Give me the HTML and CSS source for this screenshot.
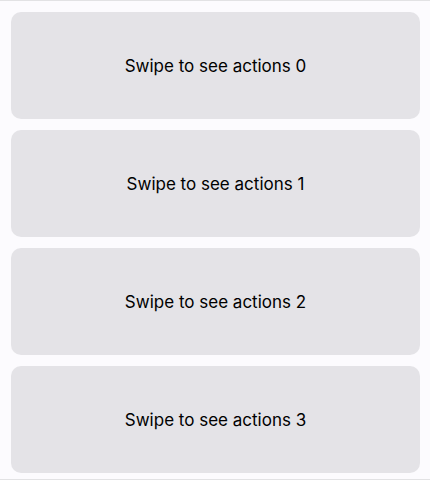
FILE: index.html
```html
<!DOCTYPE html>
<html>
<head>
<meta charset="utf-8">
<link rel="stylesheet" href="styles.css">
</head>
<body>
<div class="screen">
  <div class="list">
    <div class="card">Swipe to see actions 0</div>
    <div class="card">Swipe to see actions 1</div>
    <div class="card">Swipe to see actions 2</div>
    <div class="card">Swipe to see actions 3</div>
  </div>
</div>
</body>
</html>
```
FILE: styles.css
```css
html, body {
  margin: 0;
  padding: 0;
}
body {
  background: #fcfbfe;
  font-family: "Inter", "Liberation Sans", sans-serif;
}
.screen {
  width: 430px;
  height: 480px;
  box-sizing: border-box;
  border-top: 1px solid #e2e2e4;
  border-bottom: 1px solid #e2e2e4;
  padding: 11px 10px 0 11px;
}
.list {
  display: flex;
  flex-direction: column;
  gap: 11px;
}
.card {
  height: 107px;
  background: #e4e3e7;
  border-radius: 10px;
  display: flex;
  align-items: center;
  justify-content: center;
  font-size: 17px;
  color: #000;
}
```
